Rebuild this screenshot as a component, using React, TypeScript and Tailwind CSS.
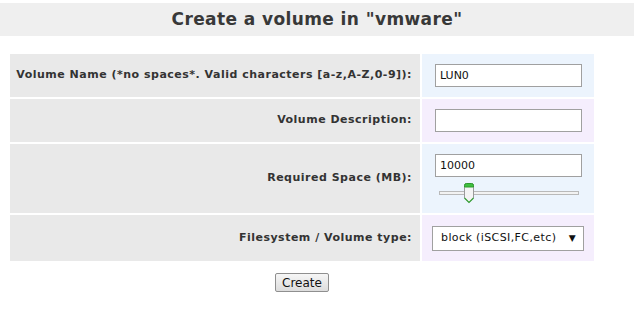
import React from "react";

function Slider() {
  return (
    <div className="relative mt-[5px] ml-[7px] h-[21px] w-[140px]">
      <div className="absolute left-0 right-0 top-[9px] h-[4px] border border-[#b9b9b9] bg-[#f2f2f2]" />
      <svg className="absolute left-[24px] top-[1px]" width="12" height="21" viewBox="0 0 12 21">
        <path d="M1.5 2.5 Q1.5 0.5 3.5 0.5 H8.5 Q10.5 0.5 10.5 2.5 V15 L6 19.5 L1.5 15 Z" fill="#f4f4f4" stroke="#9a9a9a" />
        <path d="M1.5 4 V2.5 Q1.5 0.5 3.5 0.5 H8.5 Q10.5 0.5 10.5 2.5 V4 Z" fill="#3fbf3f" stroke="#2e9a2e" />
        <path d="M1.5 15 L6 19.5 L10.5 15" fill="none" stroke="#3aa53a" strokeWidth="1.2" />
      </svg>
    </div>
  );
}

export default function App() {
  const label = "flex items-center justify-end bg-[#e9e9e9] pr-[8px] text-[11px] tracking-[0.5px] font-bold text-[#333] font-['DejaVu_Sans',Verdana,sans-serif]";
  const input = "ml-[3px] h-[23px] w-[147px] border border-[#a0a0a0] bg-white px-[4px] text-[11px] text-[#111] font-['DejaVu_Sans',Verdana,sans-serif] outline-none";
  return (
    <div className="h-[310px] w-[634px] bg-white font-['DejaVu_Sans',Verdana,sans-serif]">
      <div className="h-[3px]" />
      <div className="flex h-[33px] items-center justify-center bg-[#efefef] text-[17px] tracking-[0.4px] font-bold text-[#383838] font-['DejaVu_Sans',Verdana,sans-serif]">
        Create a volume in "vmware"
      </div>
      <div className="ml-[10px] mt-[18px] grid w-[584px] grid-cols-[410px_172px] gap-[2px]">
        <div className={`${label} h-[43px]`}>Volume Name (*no spaces*. Valid characters [a-z,A-Z,0-9]):</div>
        <div className="flex h-[43px] items-center bg-[#ecf4fd] pl-[10px]">
          <input className={input} defaultValue="LUN0" />
        </div>
        <div className={`${label} h-[43px]`}>Volume Description:</div>
        <div className="flex h-[43px] items-center bg-[#f5eefd] pl-[10px]">
          <input className={input} defaultValue="" />
        </div>
        <div className={`${label} h-[69px]`}>Required Space (MB):</div>
        <div className="flex h-[69px] flex-col bg-[#ecf4fd] pl-[10px] pt-[10px]">
          <input className={input} defaultValue="10000" />
          <Slider />
        </div>
        <div className={`${label} h-[46px]`}>Filesystem / Volume type:</div>
        <div className="flex h-[46px] items-center bg-[#f5eefd] pl-[10px] pt-[1px]">
          <div className="flex h-[25px] w-[152px] items-center justify-between border border-[#a0a0a0] bg-white pl-[8px] pr-[7px] text-[11px] tracking-[0.4px] text-[#111]">
            <span>block (iSCSI,FC,etc)</span>
            <span className="text-[9px]">▼</span>
          </div>
        </div>
      </div>
      <div className="ml-[10px] mt-[12px] flex w-[584px] justify-center">
        <button className="h-[19px] w-[54px] rounded-[2px] border border-[#8f8f8f] bg-gradient-to-b from-[#f6f6f6] to-[#dddddd] text-[12px] leading-none text-[#111] font-['DejaVu_Sans',Verdana,sans-serif]">
          Create
        </button>
      </div>
    </div>
  );
}
